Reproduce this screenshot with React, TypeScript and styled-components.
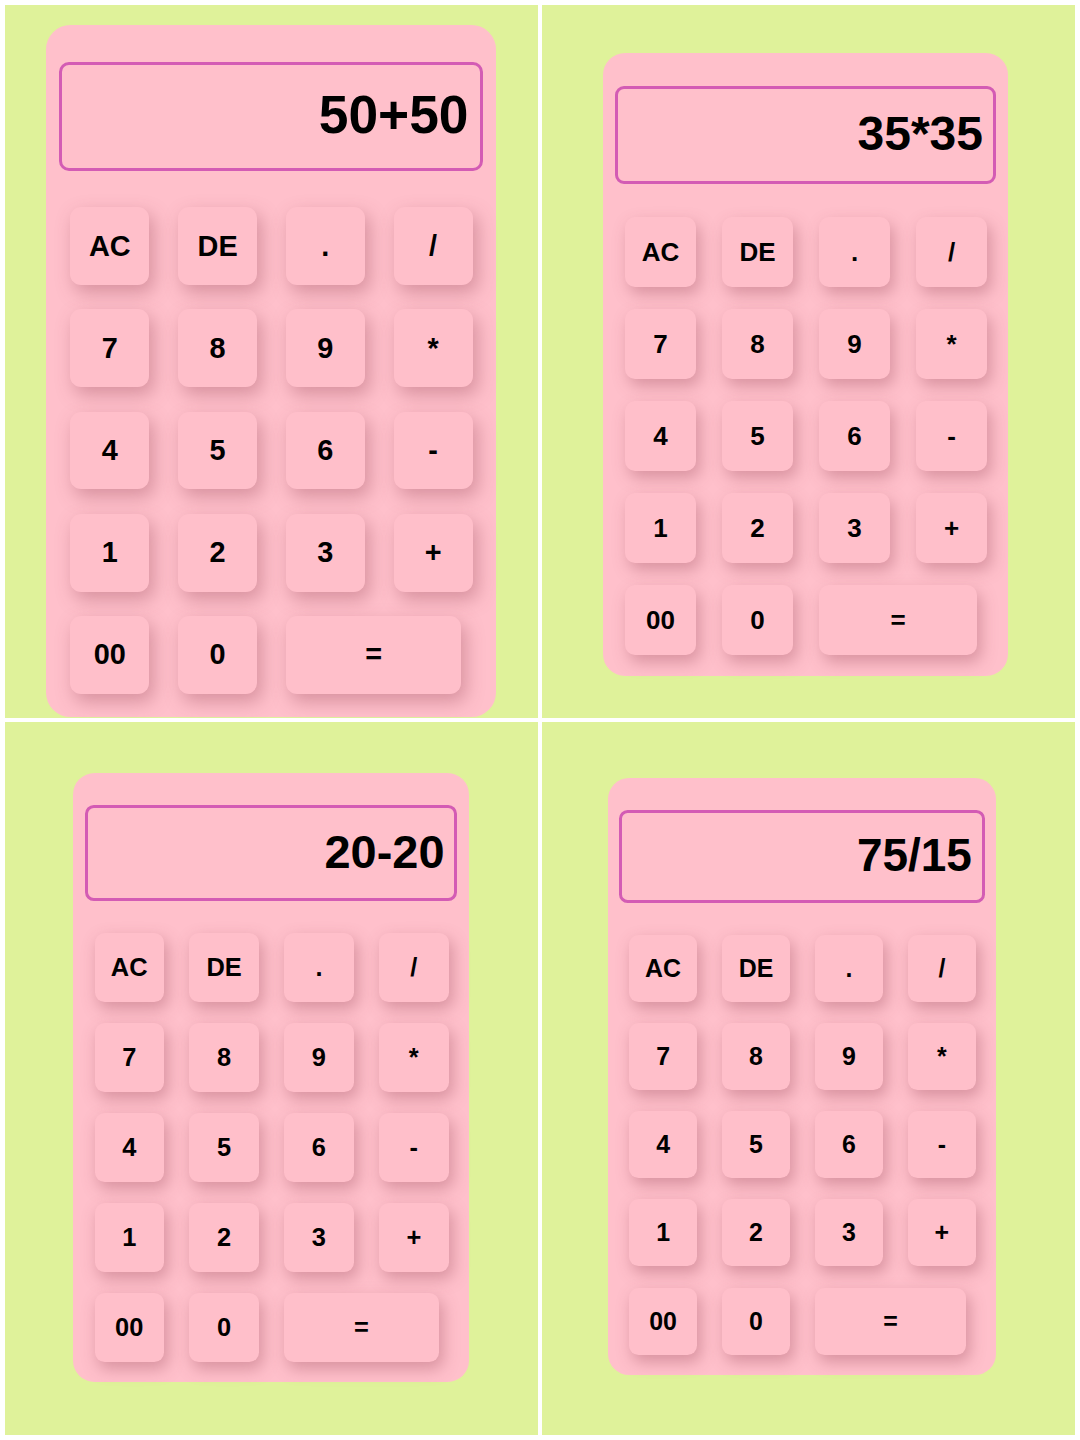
import styled, { createGlobalStyle } from 'styled-components';

const GlobalStyle = createGlobalStyle`
  html, body {
    margin: 0;
    padding: 0;
    background: #ffffff;
  }
  body {
    font-family: "Liberation Sans", Arial, sans-serif;
  }
`;

const KEYS = ['AC', 'DE', '.', '/', '7', '8', '9', '*', '4', '5', '6', '-', '1', '2', '3', '+', '00', '0', '='];

const SHOTS = [
  { expression: '50+50', scale: 1.111, top: 20, left: 41 },
  { expression: '35*35', scale: 1, top: 48, left: 61 },
  { expression: '20-20', scale: 0.978, top: 51, left: 68 },
  { expression: '75/15', scale: 0.958, top: 56, left: 66 },
];

interface CalculatorProps {
  expression: string;
  scale: number;
}

const Calculator = ({ expression, scale }: CalculatorProps) => {
  return (
    <Card $scale={scale}>
      <Display>{expression}</Display>
      <Keypad>
        {KEYS.map((key) => (
          <Key key={key} $wide={key === '='}>
            {key}
          </Key>
        ))}
      </Keypad>
    </Card>
  );
};

const App = () => {
  return (
    <>
      <GlobalStyle />
      <Page>
        {SHOTS.map((shot) => (
          <Quadrant key={shot.expression} $top={shot.top} $left={shot.left}>
            <Calculator expression={shot.expression} scale={shot.scale} />
          </Quadrant>
        ))}
      </Page>
    </>
  );
};

const Page = styled.main`
  display: grid;
  grid-template-columns: 533px 533px;
  grid-template-rows: 713px 713px;
  gap: 4px;
  padding: 5px;
  width: 1080px;
  height: 1440px;
  box-sizing: border-box;
  background: #ffffff;
`;

const Quadrant = styled.section<{ $top: number; $left: number }>`
  display: flex;
  align-items: flex-start;
  padding: ${(p) => p.$top}px 0 0 ${(p) => p.$left}px;
  box-sizing: border-box;
  background: #dff29a;
  overflow: hidden;
`;

const Card = styled.div<{ $scale: number }>`
  --u: ${(p) => p.$scale}px;
  display: flex;
  flex-direction: column;
  width: calc(405 * var(--u));
  height: calc(623 * var(--u));
  padding: calc(33 * var(--u)) calc(12 * var(--u)) 0;
  box-sizing: border-box;
  background: #ffc0cb;
  border-radius: calc(22 * var(--u));
`;

const Display = styled.div`
  display: flex;
  align-items: center;
  justify-content: flex-end;
  height: calc(98 * var(--u));
  padding: 0 calc(10 * var(--u)) calc(3 * var(--u)) 0;
  box-sizing: border-box;
  border: 3px solid #d35cb4;
  border-radius: calc(9 * var(--u));
  font-size: calc(48 * var(--u));
  font-weight: 700;
  color: #000000;
`;

const Keypad = styled.div`
  display: grid;
  grid-template-columns: repeat(4, calc(71 * var(--u)));
  grid-auto-rows: calc(70 * var(--u));
  column-gap: calc(26 * var(--u));
  row-gap: calc(22 * var(--u));
  margin: calc(33 * var(--u)) 0 0 calc(10 * var(--u));
`;

const Key = styled.button<{ $wide?: boolean }>`
  grid-column: ${(p) => (p.$wide ? 'span 2' : 'auto')};
  width: ${(p) => (p.$wide ? 'calc(158 * var(--u))' : '100%')};
  height: 100%;
  padding: 0;
  border: none;
  border-radius: calc(10 * var(--u));
  background: #ffbfca;
  box-shadow: calc(4 * var(--u)) calc(7 * var(--u)) calc(16 * var(--u)) rgba(140, 60, 75, 0.34);
  font-family: "Liberation Sans", Arial, sans-serif;
  font-size: calc(26 * var(--u));
  font-weight: 700;
  color: #000000;
`;

export default App;
